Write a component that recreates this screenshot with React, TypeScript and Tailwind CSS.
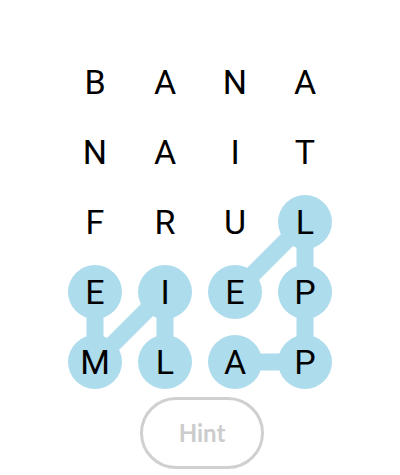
import React from 'react';

const rows = ['BANA', 'NAIT', 'FRUL', 'EIEP', 'MLAP'];

// cells that belong to a found word, as "row-col"
const found = new Set(['2-3', '3-0', '3-1', '3-2', '3-3', '4-0', '4-1', '4-2', '4-3']);

// found words, as paths through cell centres
const words: [number, number][][] = [
  [[4, 1], [3, 1], [4, 0], [3, 0]],
  [[4, 2], [4, 3], [3, 3], [2, 3], [3, 2]],
];

const center = (n: number) => 35 + n * 70;

export default function App() {
  return (
    <div className="w-[400px] h-[475px] bg-white flex flex-col items-center pt-[47px] overflow-hidden">
      <div className="relative w-[280px]">
        {/* connectors between picked letters */}
        <svg className="absolute inset-0" width="280" height="350" viewBox="0 0 280 350">
          {words.map((w, i) => (
            <polyline
              key={i}
              points={w.map(([r, c]) => `${center(c)},${center(r)}`).join(' ')}
              fill="none"
              stroke="#addcec"
              strokeWidth="17"
              strokeLinejoin="round"
            />
          ))}
        </svg>

        <div className="relative grid grid-cols-4">
          {rows.map((row, r) =>
            row.split('').map((ch, c) => (
              <div key={`${r}-${c}`} className="w-[70px] h-[70px] flex items-center justify-center">
                <div
                  className={`w-[54px] h-[54px] rounded-full flex items-center justify-center text-[34px] text-black font-['Roboto',sans-serif] ${
                    found.has(`${r}-${c}`) ? 'bg-[#addcec]' : ''
                  }`}
                >
                  {ch}
                </div>
              </div>
            ))
          )}
        </div>
      </div>

      <button className="ml-[4px] w-[124px] h-[72px] rounded-full border-[3px] border-[#d0d0d0] bg-white text-[#cccccc] text-[24px] font-bold font-['Lato',sans-serif]">
        Hint
      </button>
    </div>
  );
}
